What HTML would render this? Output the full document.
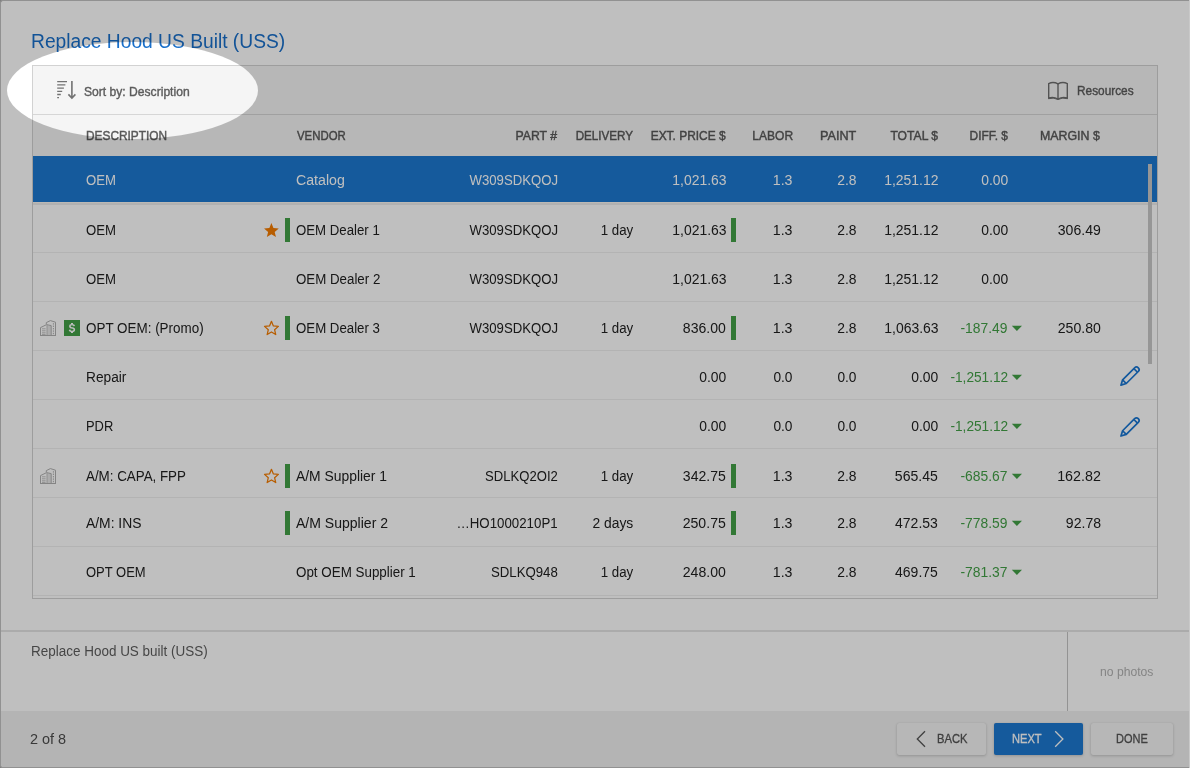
<!DOCTYPE html>
<html lang="en">
<head>
<meta charset="utf-8">
<title>Replace Hood US Built (USS)</title>
<style>
html,body{margin:0;padding:0}
body{width:1190px;height:768px;overflow:hidden;background:#c9c9c9;font-family:"Liberation Sans",sans-serif;position:relative}
#stage{position:absolute;left:0;top:0;width:1189px;height:768px;overflow:hidden;will-change:transform;background:#a6a6a6}
#dlg{position:absolute;left:0;top:0;width:1188px;height:766px;border:1px solid #c2c2c2;border-right:none;border-radius:3px 0 0 3px;background:#fff}
.abs{position:absolute}
.t{position:absolute;white-space:nowrap;line-height:1;display:block}
.title{color:#196fca}
.tb{color:#5c5c5c;-webkit-text-stroke:.4px #5c5c5c}
.th{color:#595959;-webkit-text-stroke:.45px #595959}
.td{color:#212121}
.sel{color:#fff}
.grn{color:#43a047}
.note{color:#5e5e5e}
.nop{color:#b2b2b2}
.pg{color:#4d4d4d}
.btn{color:#555;-webkit-text-stroke:.3px #555}
.btnw{color:#fff;-webkit-text-stroke:.3px #fff}
#tblbox{left:32px;top:65px;width:1124px;height:532px;border:1px solid #d2d2d2;background:#fff}
#toolbar{left:33px;top:66px;width:1124px;height:48px;background:#f5f5f5}
#tbline{left:33px;top:114px;width:1124px;height:1px;background:#d6d6d6}
#thead{left:33px;top:115px;width:1124px;height:41px;background:#f5f5f5}
#selrow{left:33px;top:156px;width:1124px;height:46px;background:#1c78d0}
.hl{position:absolute;left:33px;width:1124px;height:1px;background:#efefef}
.gbar{position:absolute;width:5px;height:24px;background:#43a047}
#thumb{left:1148px;top:164px;width:4px;height:200px;background:#c8c8c8}
#sep{left:1px;top:630px;width:1188px;height:2px;background:#e5e5e5}
#vsep{left:1067px;top:632px;width:1px;height:79px;background:#c4c4c4}
#footer{left:1px;top:711px;width:1188px;height:56px;background:#f0f0f0;border-radius:0 0 0 2px}
.button{position:absolute;top:723px;height:32px;border-radius:2px;background:#f4f4f4;box-shadow:0 1px 3px rgba(0,0,0,.18),0 0 1px rgba(0,0,0,.10)}
#next{background:#1c78d0}
#spot{position:absolute;left:7px;top:41.5px;width:251px;height:97.5px;border-radius:50%;box-shadow:0 0 0 3000px rgba(0,0,0,.25)}
svg{position:absolute;overflow:visible}
</style>
</head>
<body>
<div id="stage">
<div id="dlg"></div>

<div id="tblbox" class="abs"></div>
<div id="toolbar" class="abs"></div>
<div id="tbline" class="abs"></div>
<div id="thead" class="abs"></div>
<div id="selrow" class="abs"></div>
<div class="abs" style="left:33px;top:202px;width:1124px;height:1px;background:#fbf7f2"></div>
<div class="abs" style="left:33px;top:203px;width:1124px;height:2px;background:#ededed"></div>
<div class="hl" style="top:252px"></div>
<div class="hl" style="top:301px"></div>
<div class="hl" style="top:350px"></div>
<div class="hl" style="top:399px"></div>
<div class="hl" style="top:448px"></div>
<div class="hl" style="top:497px"></div>
<div class="hl" style="top:546px"></div>
<div class="hl" style="top:595px"></div>

<!-- green bars -->
<div class="gbar" style="left:285px;top:218px"></div>
<div class="gbar" style="left:731px;top:218px"></div>
<div class="gbar" style="left:285px;top:316px"></div>
<div class="gbar" style="left:731px;top:316px"></div>
<div class="gbar" style="left:285px;top:464px"></div>
<div class="gbar" style="left:731px;top:464px"></div>
<div class="gbar" style="left:285px;top:511px"></div>
<div class="gbar" style="left:731px;top:511px"></div>

<div id="thumb" class="abs"></div>

<!-- sort icon -->
<svg style="left:50px;top:75px" width="32" height="30" viewBox="50 75 32 30">
 <g stroke="#737373" stroke-width="1.3" fill="none">
  <path d="M57.2 81.7H67M57.2 84.9H65.4M57.2 88.1H63.9M57.2 91.3H62.2M57.2 94.5H60.8M57.2 97.7H59"/>
 </g>
 <g stroke="#737373" stroke-width="1.6" fill="none" stroke-linejoin="miter">
  <path d="M71.9 80.9V98M68.4 94.4L71.9 98L75.4 94.4"/>
 </g>
</svg>

<!-- book icon -->
<svg style="left:1040px;top:76px" width="40" height="30" viewBox="1040 76 40 30">
 <g stroke="#6f6f6f" stroke-width="1.4" fill="none" stroke-linejoin="miter">
  <path d="M1048.7 83.6Q1053.2 81.3 1058 83.9Q1062.8 81.3 1067.3 83.6V98.2Q1062.8 96.4 1058 99Q1053.2 96.4 1048.7 98.2Z"/>
  <path d="M1058 83.9V99.3"/>
  <path d="M1048.7 98.7Q1053.2 97 1058 99.5Q1062.8 97 1067.3 98.7" stroke-width="1"/>
 </g>
</svg>

<!-- building icons -->
<svg class="bld" style="left:40px;top:320px" width="16" height="16" viewBox="0 0 16 16">
 <g><g fill="none" stroke="#b0b0b0" stroke-width="1">
   <rect x="7.2" y="5.4" width="3.8" height="10" fill="#e6e6e6" stroke="none"/>
   <path d="M0.5 15.5V7.6L6.6 4.6L11.2 5.6V15.5"/>
   <path d="M6.3 4.2V2.6L10.4 0.6L15.5 2.2V15.5"/>
   <path d="M0 15.5H16"/>
   <path d="M7 5V15.5" stroke-width=".8"/>
   <path d="M2 8.8H5.6M2 10.8H5.6M2 12.8H5.6M2 14.4H5.6" stroke-width=".8"/>
   <path d="M13.4 3.2V14.6" stroke-dasharray="1.4 1" stroke-width="1"/></g></g>
</svg>
<svg class="bld" style="left:40px;top:468px" width="16" height="16" viewBox="0 0 16 16">
 <g><g fill="none" stroke="#b0b0b0" stroke-width="1">
   <rect x="7.2" y="5.4" width="3.8" height="10" fill="#e6e6e6" stroke="none"/>
   <path d="M0.5 15.5V7.6L6.6 4.6L11.2 5.6V15.5"/>
   <path d="M6.3 4.2V2.6L10.4 0.6L15.5 2.2V15.5"/>
   <path d="M0 15.5H16"/>
   <path d="M7 5V15.5" stroke-width=".8"/>
   <path d="M2 8.8H5.6M2 10.8H5.6M2 12.8H5.6M2 14.4H5.6" stroke-width=".8"/>
   <path d="M13.4 3.2V14.6" stroke-dasharray="1.4 1" stroke-width="1"/></g></g>
</svg>


<!-- $ promo -->
<div class="abs" style="left:64px;top:320px;width:16px;height:16px;background:#43a047"></div>
<span class="t" style="left:68.55px;top:323.1px;font-size:10.5px;font-weight:bold;color:#fff">S</span>
<div class="abs" style="left:71.4px;top:322.9px;width:1.3px;height:1.6px;background:#fff"></div>
<div class="abs" style="left:71.4px;top:331.6px;width:1.3px;height:1.5px;background:#fff"></div>

<!-- stars -->
<svg style="left:0;top:0" width="1189" height="768" viewBox="0 0 1189 768">
 <g transform="translate(271.4 230.85)" fill="#f57c00"><path d="M0.00 -7.74L2.03 -2.79L7.36 -2.39L3.28 1.07L4.55 6.26L0.00 3.45L-4.55 6.26L-3.28 1.07L-7.36 -2.39L-2.03 -2.79Z"/></g>
 <g transform="translate(271.45 328.65)" fill="none" stroke="#f57c00" stroke-width="1.25" stroke-linejoin="round"><path d="M0.00 -7.30L1.94 -2.67L6.94 -2.26L3.14 1.02L4.29 5.91L0.00 3.30L-4.29 5.91L-3.14 1.02L-6.94 -2.26L-1.94 -2.67Z"/></g>
 <g transform="translate(271.45 476.65)" fill="none" stroke="#f57c00" stroke-width="1.25" stroke-linejoin="round"><path d="M0.00 -7.30L1.94 -2.67L6.94 -2.26L3.14 1.02L4.29 5.91L0.00 3.30L-4.29 5.91L-3.14 1.02L-6.94 -2.26L-1.94 -2.67Z"/></g>
 <!-- pencils -->
 <g transform="translate(1120.4 385.7) rotate(-45)"><g fill="none" stroke="#1976d2" stroke-width="1.7" stroke-linejoin="round">
   <path d="M0.8 0L5.7 -2.6H22.7A2.6 2.6 0 0 1 22.7 2.6H5.7Z"/>
   <path d="M5.7 -2.6V2.6M21.6 -2.6V2.6"/></g></g>
 <g transform="translate(1120.4 436.6) rotate(-45)"><g fill="none" stroke="#1976d2" stroke-width="1.7" stroke-linejoin="round">
   <path d="M0.8 0L5.7 -2.6H22.7A2.6 2.6 0 0 1 22.7 2.6H5.7Z"/>
   <path d="M5.7 -2.6V2.6M21.6 -2.6V2.6"/></g></g>
 <!-- down triangles -->
 <g fill="#43a047">
  <path d="M1011.8 325.8h10.2l-5.1 5.3z"/>
  <path d="M1011.8 374.8h10.2l-5.1 5.3z"/>
  <path d="M1011.8 423.8h10.2l-5.1 5.3z"/>
  <path d="M1011.8 473.8h10.2l-5.1 5.3z"/>
  <path d="M1011.8 520.8h10.2l-5.1 5.3z"/>
  <path d="M1011.8 569.8h10.2l-5.1 5.3z"/>
 </g>
</svg>

<div id="sep" class="abs"></div>
<div id="vsep" class="abs"></div>
<div id="footer" class="abs"></div>
<div class="button" style="left:897px;width:89px"></div>
<div class="button" id="next" style="left:994px;width:89px"></div>
<div class="button" style="left:1091px;width:82px"></div>
<svg style="left:0;top:0" width="1189" height="768" viewBox="0 0 1189 768">
 <path d="M925 731.3L917.3 739L925 746.7" fill="none" stroke="#555" stroke-width="1.3"/>
 <path d="M1055.2 731.3L1062.9 739L1055.2 746.7" fill="none" stroke="#fff" stroke-width="1.3"/>
</svg>

<span id="t0" class="t title" style="left:31.22px;top:31.47px;font-size:20px;transform:scaleX(0.9608);transform-origin:0 0">Replace Hood US Built (USS)</span>
<span id="t1" class="t tb" style="left:83.55px;top:86.42px;font-size:12.5px;transform:scaleX(0.9685);transform-origin:0 0">Sort by: Description</span>
<span id="t2" class="t tb" style="left:1077.03px;top:85.42px;font-size:12.5px;transform:scaleX(0.9473);transform-origin:0 0">Resources</span>
<span id="t3" class="t th" style="left:85.53px;top:129.00px;font-size:13px;transform:scaleX(0.9133);transform-origin:0 0">DESCRIPTION</span>
<span id="t4" class="t th" style="left:297.25px;top:129.00px;font-size:13px;transform:scaleX(0.8770);transform-origin:0 0">VENDOR</span>
<span id="t5" class="t th" style="right:632.14px;top:129.00px;font-size:13px;transform:scaleX(0.9448);transform-origin:100% 0">PART #</span>
<span id="t6" class="t th" style="right:555.64px;top:129.00px;font-size:13px;transform:scaleX(0.8961);transform-origin:100% 0">DELIVERY</span>
<span id="t7" class="t th" style="right:463.71px;top:129.00px;font-size:13px;transform:scaleX(0.9184);transform-origin:100% 0">EXT. PRICE $</span>
<span id="t8" class="t th" style="right:396.14px;top:129.00px;font-size:13px;transform:scaleX(0.9245);transform-origin:100% 0">LABOR</span>
<span id="t9" class="t th" style="right:332.21px;top:129.00px;font-size:13px;transform:scaleX(0.9707);transform-origin:100% 0">PAINT</span>
<span id="t10" class="t th" style="right:251.30px;top:129.00px;font-size:13px;transform:scaleX(0.9327);transform-origin:100% 0">TOTAL $</span>
<span id="t11" class="t th" style="right:180.81px;top:129.00px;font-size:13px;transform:scaleX(0.9158);transform-origin:100% 0">DIFF. $</span>
<span id="t12" class="t th" style="right:88.70px;top:129.00px;font-size:13px;transform:scaleX(0.9534);transform-origin:100% 0">MARGIN $</span>
<span id="t13" class="t sel" style="left:85.68px;top:173.15px;font-size:14px;transform:scaleX(0.9409);transform-origin:0 0">OEM</span>
<span id="t14" class="t sel" style="left:295.83px;top:173.15px;font-size:14px;transform:scaleX(1.0120);transform-origin:0 0">Catalog</span>
<span id="t15" class="t sel" style="right:631.12px;top:173.15px;font-size:14px;transform:scaleX(0.9416);transform-origin:100% 0">W309SDKQOJ</span>
<span id="t16" class="t sel" style="right:462.99px;top:173.15px;font-size:14px;transform:scaleX(0.9948);transform-origin:100% 0">1,021.63</span>
<span id="t17" class="t sel" style="right:396.38px;top:173.15px;font-size:14px;transform:scaleX(1.0118);transform-origin:100% 0">1.3</span>
<span id="t18" class="t sel" style="right:332.20px;top:173.15px;font-size:14px;transform:scaleX(0.9912);transform-origin:100% 0">2.8</span>
<span id="t19" class="t sel" style="right:250.80px;top:173.15px;font-size:14px;transform:scaleX(0.9965);transform-origin:100% 0">1,251.12</span>
<span id="t20" class="t sel" style="right:181.16px;top:173.15px;font-size:14px;transform:scaleX(0.9918);transform-origin:100% 0">0.00</span>
<span id="t21" class="t td" style="left:85.68px;top:223.15px;font-size:14px;transform:scaleX(0.9409);transform-origin:0 0">OEM</span>
<span id="t22" class="t td" style="left:295.87px;top:223.15px;font-size:14px;transform:scaleX(0.9445);transform-origin:0 0">OEM Dealer 1</span>
<span id="t23" class="t td" style="right:631.12px;top:223.15px;font-size:14px;transform:scaleX(0.9416);transform-origin:100% 0">W309SDKQOJ</span>
<span id="t24" class="t td" style="right:556.17px;top:223.15px;font-size:14px;transform:scaleX(0.9501);transform-origin:100% 0">1 day</span>
<span id="t25" class="t td" style="right:462.99px;top:223.15px;font-size:14px;transform:scaleX(0.9948);transform-origin:100% 0">1,021.63</span>
<span id="t26" class="t td" style="right:396.38px;top:223.15px;font-size:14px;transform:scaleX(1.0118);transform-origin:100% 0">1.3</span>
<span id="t27" class="t td" style="right:332.20px;top:223.15px;font-size:14px;transform:scaleX(0.9912);transform-origin:100% 0">2.8</span>
<span id="t28" class="t td" style="right:250.80px;top:223.15px;font-size:14px;transform:scaleX(0.9965);transform-origin:100% 0">1,251.12</span>
<span id="t29" class="t td" style="right:181.16px;top:223.15px;font-size:14px;transform:scaleX(0.9918);transform-origin:100% 0">0.00</span>
<span id="t30" class="t td" style="right:88.13px;top:223.15px;font-size:14px;transform:scaleX(1.0052);transform-origin:100% 0">306.49</span>
<span id="t31" class="t td" style="left:85.68px;top:272.15px;font-size:14px;transform:scaleX(0.9409);transform-origin:0 0">OEM</span>
<span id="t32" class="t td" style="left:295.87px;top:272.15px;font-size:14px;transform:scaleX(0.9504);transform-origin:0 0">OEM Dealer 2</span>
<span id="t33" class="t td" style="right:631.12px;top:272.15px;font-size:14px;transform:scaleX(0.9416);transform-origin:100% 0">W309SDKQOJ</span>
<span id="t34" class="t td" style="right:462.99px;top:272.15px;font-size:14px;transform:scaleX(0.9948);transform-origin:100% 0">1,021.63</span>
<span id="t35" class="t td" style="right:396.38px;top:272.15px;font-size:14px;transform:scaleX(1.0118);transform-origin:100% 0">1.3</span>
<span id="t36" class="t td" style="right:332.20px;top:272.15px;font-size:14px;transform:scaleX(0.9912);transform-origin:100% 0">2.8</span>
<span id="t37" class="t td" style="right:250.80px;top:272.15px;font-size:14px;transform:scaleX(0.9965);transform-origin:100% 0">1,251.12</span>
<span id="t38" class="t td" style="right:181.16px;top:272.15px;font-size:14px;transform:scaleX(0.9918);transform-origin:100% 0">0.00</span>
<span id="t39" class="t td" style="left:85.66px;top:321.15px;font-size:14px;transform:scaleX(0.9591);transform-origin:0 0">OPT OEM: (Promo)</span>
<span id="t40" class="t td" style="left:295.87px;top:321.15px;font-size:14px;transform:scaleX(0.9460);transform-origin:0 0">OEM Dealer 3</span>
<span id="t41" class="t td" style="right:631.12px;top:321.15px;font-size:14px;transform:scaleX(0.9416);transform-origin:100% 0">W309SDKQOJ</span>
<span id="t42" class="t td" style="right:556.17px;top:321.15px;font-size:14px;transform:scaleX(0.9501);transform-origin:100% 0">1 day</span>
<span id="t43" class="t td" style="right:462.98px;top:321.15px;font-size:14px;transform:scaleX(1.0042);transform-origin:100% 0">836.00</span>
<span id="t44" class="t td" style="right:396.38px;top:321.15px;font-size:14px;transform:scaleX(1.0118);transform-origin:100% 0">1.3</span>
<span id="t45" class="t td" style="right:332.20px;top:321.15px;font-size:14px;transform:scaleX(0.9912);transform-origin:100% 0">2.8</span>
<span id="t46" class="t td" style="right:250.80px;top:321.15px;font-size:14px;transform:scaleX(0.9948);transform-origin:100% 0">1,063.63</span>
<span id="t47" class="t grn" style="right:181.16px;top:321.15px;font-size:14px;transform:scaleX(0.9895);transform-origin:100% 0">-187.49</span>
<span id="t48" class="t td" style="right:88.13px;top:321.15px;font-size:14px;transform:scaleX(1.0065);transform-origin:100% 0">250.80</span>
<span id="t49" class="t td" style="left:85.65px;top:370.15px;font-size:14px;transform:scaleX(0.9784);transform-origin:0 0">Repair</span>
<span id="t50" class="t td" style="right:462.99px;top:370.15px;font-size:14px;transform:scaleX(0.9918);transform-origin:100% 0">0.00</span>
<span id="t51" class="t td" style="right:396.40px;top:370.15px;font-size:14px;transform:scaleX(0.9794);transform-origin:100% 0">0.0</span>
<span id="t52" class="t td" style="right:332.20px;top:370.15px;font-size:14px;transform:scaleX(0.9794);transform-origin:100% 0">0.0</span>
<span id="t53" class="t td" style="right:250.80px;top:370.15px;font-size:14px;transform:scaleX(0.9918);transform-origin:100% 0">0.00</span>
<span id="t54" class="t grn" style="right:181.17px;top:370.15px;font-size:14px;transform:scaleX(0.9754);transform-origin:100% 0">-1,251.12</span>
<span id="t55" class="t td" style="left:85.69px;top:419.15px;font-size:14px;transform:scaleX(0.9222);transform-origin:0 0">PDR</span>
<span id="t56" class="t td" style="right:462.99px;top:419.15px;font-size:14px;transform:scaleX(0.9918);transform-origin:100% 0">0.00</span>
<span id="t57" class="t td" style="right:396.40px;top:419.15px;font-size:14px;transform:scaleX(0.9794);transform-origin:100% 0">0.0</span>
<span id="t58" class="t td" style="right:332.20px;top:419.15px;font-size:14px;transform:scaleX(0.9794);transform-origin:100% 0">0.0</span>
<span id="t59" class="t td" style="right:250.80px;top:419.15px;font-size:14px;transform:scaleX(0.9918);transform-origin:100% 0">0.00</span>
<span id="t60" class="t grn" style="right:181.17px;top:419.15px;font-size:14px;transform:scaleX(0.9754);transform-origin:100% 0">-1,251.12</span>
<span id="t61" class="t td" style="left:85.67px;top:469.15px;font-size:14px;transform:scaleX(0.9539);transform-origin:0 0">A/M: CAPA, FPP</span>
<span id="t62" class="t td" style="left:295.84px;top:469.15px;font-size:14px;transform:scaleX(0.9911);transform-origin:0 0">A/M Supplier 1</span>
<span id="t63" class="t td" style="right:631.13px;top:469.15px;font-size:14px;transform:scaleX(0.9350);transform-origin:100% 0">SDLKQ2OI2</span>
<span id="t64" class="t td" style="right:556.17px;top:469.15px;font-size:14px;transform:scaleX(0.9501);transform-origin:100% 0">1 day</span>
<span id="t65" class="t td" style="right:462.98px;top:469.15px;font-size:14px;transform:scaleX(1.0034);transform-origin:100% 0">342.75</span>
<span id="t66" class="t td" style="right:396.38px;top:469.15px;font-size:14px;transform:scaleX(1.0118);transform-origin:100% 0">1.3</span>
<span id="t67" class="t td" style="right:332.20px;top:469.15px;font-size:14px;transform:scaleX(0.9912);transform-origin:100% 0">2.8</span>
<span id="t68" class="t td" style="right:250.79px;top:469.15px;font-size:14px;transform:scaleX(1.0040);transform-origin:100% 0">565.45</span>
<span id="t69" class="t grn" style="right:181.16px;top:469.15px;font-size:14px;transform:scaleX(0.9903);transform-origin:100% 0">-685.67</span>
<span id="t70" class="t td" style="right:88.12px;top:469.15px;font-size:14px;transform:scaleX(1.0192);transform-origin:100% 0">162.82</span>
<span id="t71" class="t td" style="left:85.64px;top:516.15px;font-size:14px;transform:scaleX(0.9903);transform-origin:0 0">A/M: INS</span>
<span id="t72" class="t td" style="left:295.84px;top:516.15px;font-size:14px;transform:scaleX(1.0023);transform-origin:0 0">A/M Supplier 2</span>
<span id="t73" class="t td" style="right:631.11px;top:516.15px;font-size:14px;transform:scaleX(0.9486);transform-origin:100% 0">…HO1000210P1</span>
<span id="t74" class="t td" style="right:556.17px;top:516.15px;font-size:14px;transform:scaleX(0.9891);transform-origin:100% 0">2 days</span>
<span id="t75" class="t td" style="right:462.98px;top:516.15px;font-size:14px;transform:scaleX(1.0075);transform-origin:100% 0">250.75</span>
<span id="t76" class="t td" style="right:396.38px;top:516.15px;font-size:14px;transform:scaleX(1.0118);transform-origin:100% 0">1.3</span>
<span id="t77" class="t td" style="right:332.20px;top:516.15px;font-size:14px;transform:scaleX(0.9912);transform-origin:100% 0">2.8</span>
<span id="t78" class="t td" style="right:250.80px;top:516.15px;font-size:14px;transform:scaleX(0.9990);transform-origin:100% 0">472.53</span>
<span id="t79" class="t grn" style="right:181.16px;top:516.15px;font-size:14px;transform:scaleX(0.9895);transform-origin:100% 0">-778.59</span>
<span id="t80" class="t td" style="right:88.13px;top:516.15px;font-size:14px;transform:scaleX(1.0036);transform-origin:100% 0">92.78</span>
<span id="t81" class="t td" style="left:85.68px;top:565.15px;font-size:14px;transform:scaleX(0.9275);transform-origin:0 0">OPT OEM</span>
<span id="t82" class="t td" style="left:295.87px;top:565.15px;font-size:14px;transform:scaleX(0.9562);transform-origin:0 0">Opt OEM Supplier 1</span>
<span id="t83" class="t td" style="right:631.12px;top:565.15px;font-size:14px;transform:scaleX(0.9443);transform-origin:100% 0">SDLKQ948</span>
<span id="t84" class="t td" style="right:556.17px;top:565.15px;font-size:14px;transform:scaleX(0.9501);transform-origin:100% 0">1 day</span>
<span id="t85" class="t td" style="right:462.98px;top:565.15px;font-size:14px;transform:scaleX(1.0065);transform-origin:100% 0">248.00</span>
<span id="t86" class="t td" style="right:396.38px;top:565.15px;font-size:14px;transform:scaleX(1.0118);transform-origin:100% 0">1.3</span>
<span id="t87" class="t td" style="right:332.20px;top:565.15px;font-size:14px;transform:scaleX(0.9912);transform-origin:100% 0">2.8</span>
<span id="t88" class="t td" style="right:250.80px;top:565.15px;font-size:14px;transform:scaleX(0.9983);transform-origin:100% 0">469.75</span>
<span id="t89" class="t grn" style="right:181.16px;top:565.15px;font-size:14px;transform:scaleX(0.9903);transform-origin:100% 0">-781.37</span>
<span id="t90" class="t note" style="left:30.89px;top:643.95px;font-size:14px;transform:scaleX(0.9625);transform-origin:0 0">Replace Hood US built (USS)</span>
<span id="t91" class="t nop" style="left:1100.19px;top:666.14px;font-size:12px;transform:scaleX(1.0140);transform-origin:0 0">no photos</span>
<span id="t92" class="t pg" style="left:29.87px;top:732.15px;font-size:14px;transform:scaleX(1.0322);transform-origin:0 0">2 of 8</span>
<span id="t93" class="t btn" style="left:936.68px;top:732.84px;font-size:12px;transform:scaleX(0.9316);transform-origin:0 0">BACK</span>
<span id="t94" class="t btnw" style="left:1012.09px;top:732.84px;font-size:12px;transform:scaleX(0.9238);transform-origin:0 0">NEXT</span>
<span id="t95" class="t btn" style="left:1115.70px;top:732.84px;font-size:12px;transform:scaleX(0.9165);transform-origin:0 0">DONE</span>

<div id="spot"></div>
</div>

</body>
</html>
